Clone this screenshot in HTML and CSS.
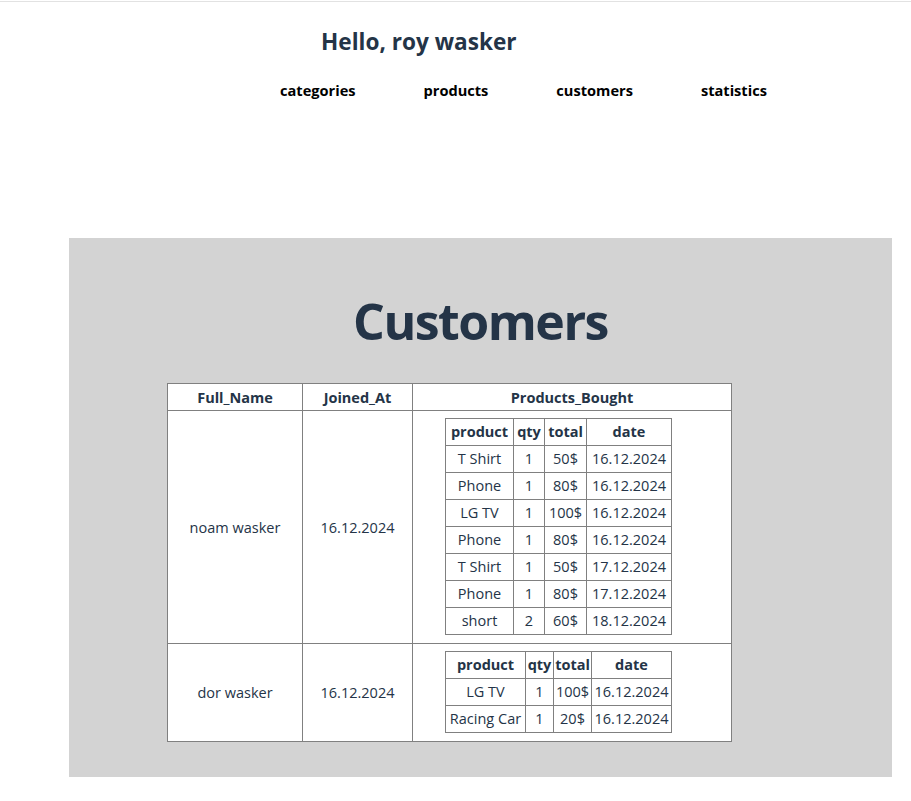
FILE: index.html
```html
<!DOCTYPE html>
<html>
<head>
<meta charset="utf-8">
<link rel="stylesheet" href="styles.css">
</head>
<body>
<header class="top">
  <h2 class="hello">Hello, roy wasker</h2>
  <nav class="nav">
    <a class="nav-link">categories</a>
    <a class="nav-link">products</a>
    <a class="nav-link">customers</a>
    <a class="nav-link">statistics</a>
  </nav>
</header>
<main class="panel">
  <h1 class="title">Customers</h1>
  <table class="main-table">
    <colgroup><col class="c1"><col class="c2"><col class="c3"></colgroup>
    <thead>
      <tr class="head-row"><th>Full_Name</th><th>Joined_At</th><th>Products_Bought</th></tr>
    </thead>
    <tbody>
      <tr>
        <td>noam wasker</td>
        <td>16.12.2024</td>
        <td class="bought">
          <table class="sub sub1">
            <colgroup><col class="p"><col class="q"><col class="t"><col class="d"></colgroup>
            <tr><th>product</th><th>qty</th><th>total</th><th>date</th></tr>
            <tr><td>T Shirt</td><td>1</td><td>50$</td><td>16.12.2024</td></tr>
            <tr><td>Phone</td><td>1</td><td>80$</td><td>16.12.2024</td></tr>
            <tr><td>LG TV</td><td>1</td><td>100$</td><td>16.12.2024</td></tr>
            <tr><td>Phone</td><td>1</td><td>80$</td><td>16.12.2024</td></tr>
            <tr><td>T Shirt</td><td>1</td><td>50$</td><td>17.12.2024</td></tr>
            <tr><td>Phone</td><td>1</td><td>80$</td><td>17.12.2024</td></tr>
            <tr><td>short</td><td>2</td><td>60$</td><td>18.12.2024</td></tr>
          </table>
        </td>
      </tr>
      <tr>
        <td>dor wasker</td>
        <td>16.12.2024</td>
        <td class="bought">
          <table class="sub sub2">
            <colgroup><col class="p"><col class="q"><col class="t"><col class="d"></colgroup>
            <tr><th>product</th><th>qty</th><th>total</th><th>date</th></tr>
            <tr><td>LG TV</td><td>1</td><td>100$</td><td>16.12.2024</td></tr>
            <tr><td>Racing Car</td><td>1</td><td>20$</td><td>16.12.2024</td></tr>
          </table>
        </td>
      </tr>
    </tbody>
  </table>
</main>
</body>
</html>
```
FILE: styles.css
```css
html, body {
  margin: 0;
  padding: 0;
  background: #ffffff;
}
body {
  font-family: "Open Sans", "Noto Sans", sans-serif;
  color: #243447;
  padding-top: 1px;
}
.top {
  border-top: 1px solid #e2e2e2;
  height: 237px;
  box-sizing: border-box;
}
.hello {
  margin: 0;
  padding: 26px 0 0 321px;
  font-size: 22.6px;
  line-height: 28px;
  font-weight: 700;
  color: #243447;
}
.nav {
  display: flex;
  gap: 68px;
  padding: 24px 0 0 280px;
}
.nav-link {
  font-size: 14.6px;
  font-weight: 700;
  color: #000;
  line-height: 20px;
}
.panel {
  background: #d3d3d3;
  margin-left: 69px;
  width: 823px;
  height: 539px;
  padding-top: 1px;
  box-sizing: border-box;
}
.title {
  margin: 52px 0 0 0;
  text-align: center;
  font-size: 50px;
  line-height: 60px;
  font-weight: 700;
  letter-spacing: -1.5px;
  color: #243447;
}
.main-table {
  margin: 32px 0 0 98px;
  border-collapse: collapse;
  background: #fff;
  table-layout: fixed;
  width: 565px;
  font-size: 14.5px;
}
.main-table .c1 { width: 135px; }
.main-table .c2 { width: 110px; }
.main-table .c3 { width: 319px; }
.main-table th, .main-table td {
  border: 1px solid #808080;
  text-align: center;
  vertical-align: middle;
  padding: 0;
}
.main-table th {
  height: 26px;
  font-weight: 700;
}
.main-table td.bought {
  padding: 7px 0 8px 32px;
  text-align: left;
}
.sub {
  border-collapse: collapse;
  table-layout: fixed;
  width: 227px;
}
.sub th, .sub td {
  height: 26px;
  padding: 0;
  line-height: 20px;
}
.sub1 .p { width: 68px; }
.sub1 .q { width: 31px; }
.sub1 .t { width: 42px; }
.sub1 .d { width: 85px; }
.sub2 .p { width: 80px; }
.sub2 .q { width: 28px; }
.sub2 .t { width: 38px; }
.sub2 .d { width: 80px; }
```
